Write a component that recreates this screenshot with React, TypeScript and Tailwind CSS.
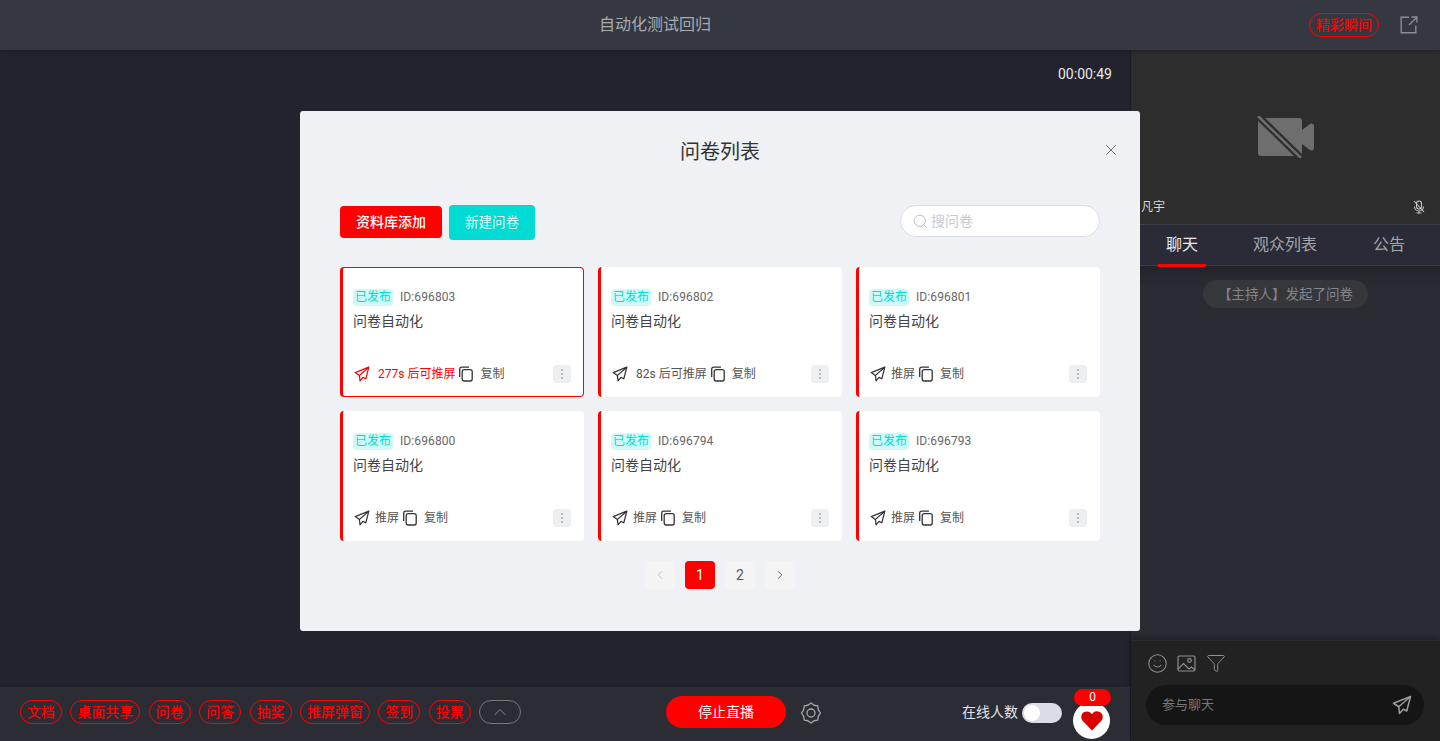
import React from "react";
import { ChevronLeft, ChevronRight, ChevronUp, X, Search, Smile, Filter } from "lucide-react";

const Plane = ({ className = "", size = 16 }: { className?: string; size?: number }) => (
  <svg width={size} height={size} viewBox="0 0 16 16" fill="none" stroke="currentColor" strokeWidth="1.25" strokeLinejoin="round" className={className}>
    <path d="M14.8 1.2 1.2 6.600l4.200 2.800.6 5.400 3-3.400 2.800 1.400z" />
    <path d="M14.8 1.2 5.400 9.400" />
  </svg>
);

const CopyIcon = () => (
  <svg width="16" height="16" viewBox="0 0 16 16" fill="none" stroke="#333" strokeWidth="1.3" className="shrink-0">
    <rect x="4.200" y="3.600" width="10" height="11.400" rx="2" />
    <path d="M1.700 11V3.200C1.700 2 2.600 1.100 3.800 1.100H11" />
  </svg>
);

const gearPath = (() => {
  const pts: string[] = [];
  for (let i = 0; i < 16; i++) {
    const a = (Math.PI * 2 * i) / 16 - Math.PI / 2;
    const r = i % 2 === 0 ? 10 : 8.4;
    pts.push(`${(11 + r * Math.cos(a) * 0.95).toFixed(2)} ${(11 + r * Math.sin(a)).toFixed(2)}`);
  }
  return `M${pts.join("L")}Z`;
})();

const Card = ({ id, push, active, hot, gap = "ml-[5px]" }: { id: string; push: string; active?: boolean; hot?: boolean; gap?: string }) => (
  <div className={`h-[130px] bg-white rounded border-l-[3px] border-l-[#ff0000] flex flex-col pl-[10px] ${active ? "border border-[#ff0000] border-l-[3px] pr-[12px]" : "pr-[13px]"}`}>
    <div className={`flex items-center ${active ? "mt-[20px]" : "mt-[21px]"} h-[18px]`}>
      <span className="h-[17px] w-[40px] rounded-sm bg-[#cff8f7] text-[#00dcd4] text-[12px] leading-[17px] text-center">已发布</span>
      <span className="ml-[7px] text-[12px] text-[#666] tracking-[0.1px]">ID:{id}</span>
    </div>
    <div className="mt-[5px] text-[14px] leading-[20px] text-[#444]">问卷自动化</div>
    <div className={`mt-auto ${active ? "mb-[13px]" : "mb-[14px]"} flex items-center h-[18px]`}>
      <Plane className={`shrink-0 ml-[1px] ${hot ? "text-[#ff0000]" : "text-[#333]"}`} />
      <span className={`${gap} text-[12px] whitespace-nowrap ${hot ? "text-[#ff0000]" : "text-[#555]"}`}>{push}</span>
      <span className="ml-[3px]"><CopyIcon /></span>
      <span className="ml-[6px] text-[12px] text-[#555]">复制</span>
      <span className="ml-auto w-[18px] h-[18px] rounded-sm bg-[#eeeff1] flex flex-col items-center justify-center gap-[2px]">
        <i className="w-[2px] h-[2px] rounded-full bg-[#aaa]" />
        <i className="w-[2px] h-[2px] rounded-full bg-[#aaa]" />
        <i className="w-[2px] h-[2px] rounded-full bg-[#aaa]" />
      </span>
    </div>
  </div>
);

const Pill = ({ children }: { children: React.ReactNode }) => (
  <span className="h-[24px] px-[6px] rounded-full border border-[#ff0000] text-[#ff0000] text-[13.9px] leading-[22px] font-medium whitespace-nowrap">{children}</span>
);

export default function App() {
  return (
    <div className="relative h-[741px] w-[1440px] overflow-hidden flex flex-col bg-[#23232d] font-['Roboto','Noto_Sans_CJK_SC',sans-serif]">
      <header className="h-[50px] shrink-0 relative z-10 flex items-center justify-center pr-[130px] bg-[#353841] shadow-[0_1px_4px_rgba(0,0,0,0.35)]">
        <span className="text-[16px] text-[#a9abb2]">自动化测试回归</span>
        <div className="absolute right-[22px] top-0 h-[50px] flex items-center">
          <span className="h-[24px] w-[70px] text-center rounded-full border border-[#ff0000] text-[#ff0000] text-[14px] leading-[22px] font-medium">精彩瞬间</span>
          <svg width="18" height="18" viewBox="0 0 18 18" fill="none" stroke="#8b8d96" strokeWidth="1.4" className="ml-[21px]">
            <path d="M15.800 9.500v7.300H1.200V1.200H9M9 9 16.800 1.200M11.500 1h5.400v5.400" />
          </svg>
        </div>
      </header>

      <div className="flex flex-1 min-h-0">
        <div className="flex-1 min-w-0 flex flex-col border-r border-[#1c1c24]">
          <main className="flex-1 flex justify-end pt-[15px] pr-[18px]">
            <span className="text-[14px] leading-[18px] text-[#e8e8ea]">00:00:49</span>
          </main>
          <footer className="h-[54px] shrink-0 bg-[#2b2c34] flex items-start pt-[13px] pl-[20px] relative">
            <div className="flex items-center gap-[8.7px]">
              <Pill>文档</Pill><Pill>桌面共享</Pill><Pill>问卷</Pill><Pill>问答</Pill><Pill>抽奖</Pill><Pill>推屏弹窗</Pill><Pill>签到</Pill><Pill>投票</Pill>
              <span className="h-[24px] w-[42px] rounded-full border border-[#77787e] flex items-center justify-center">
                <ChevronUp size={20} strokeWidth={1.2} className="text-[#8b8c92]" />
              </span>
            </div>
            <button className="absolute left-[666px] top-[9px] w-[120px] h-[32px] rounded-full bg-[#ff0000] text-white text-[14px]">停止直播</button>
            <svg width="22" height="22" viewBox="0 0 22 22" fill="none" stroke="#a6a7ad" strokeWidth="1.3" strokeLinejoin="round" className="absolute left-[800px] top-[15px]">
              <path d={gearPath} />
              <circle cx="11" cy="11" r="4" />
            </svg>
            <span className="absolute left-[962px] top-[15px] text-[14px] leading-[20px] text-[#e4e4e6]">在线人数</span>
            <span className="absolute left-[1022px] top-[16px] w-[40px] h-[20px] rounded-full bg-[#dadde6] flex items-center pl-[2px]">
              <i className="w-[16px] h-[16px] rounded-full bg-white" />
            </span>
            <span className="absolute left-[1073px] top-[15px] w-[37px] h-[37px] rounded-full bg-white flex items-center justify-center">
              <svg width="22" height="20" viewBox="0 0 24 22" fill="#d90000"><path d="M12 21.500 2 11C-.8 8-.2 3.500 2.800 1.500 6 -.5 10 .5 12 3.500 14-.5 18-.5 21.200 1.500c3 2 3.600 6.500.8 9.500z" /></svg>
            </span>
            <span className="absolute left-[1074px] top-[2px] w-[37px] h-[17px] rounded-full bg-[#ff0000] text-white text-[12px] leading-[17px] text-center">0</span>
          </footer>
        </div>

        <aside className="w-[309px] shrink-0 flex flex-col bg-[#2a2b33]">
          <div className="h-[174px] shrink-0 bg-[#2d2d2d] relative flex items-center justify-center">
            <svg width="58" height="42" viewBox="0 0 58 42" fill="#6e6e6e">
              <path d="M4 2h38a3 3 0 0 1 3 3v32a3 3 0 0 1-3 3H4a3 3 0 0 1-3-3V5a3 3 0 0 1 3-3z" />
              <path d="M45 14l8-6c2-1 4 0 4 2v22c0 2-2 3-4 2l-8-6z" />
              <path d="M1 0 44 42" stroke="#2d2d2d" strokeWidth="7" />
              <path d="M1 0 44 42" stroke="#6e6e6e" strokeWidth="2.500" />
            </svg>
            <span className="absolute left-[10px] bottom-[8px] text-[12px] leading-[18px] text-[#d8d8d8]">凡宇</span>
            <svg width="12" height="14" viewBox="0 0 12 14" fill="none" stroke="#c8c8c8" strokeWidth="1.100" className="absolute right-[15px] bottom-[10px]">
              <rect x="3.500" y="1" width="5" height="8" rx="2.500" /><path d="M1.500 6.500a4.500 4.500 0 0 0 9 0M6 11v2M3.500 13h5M1 1l10 11" />
            </svg>
          </div>
          <div className="h-[42px] shrink-0 border-t border-b border-[#3c3d47] bg-[#2a2b36] flex text-[16px] text-[#a5a6ad] relative">
            <span className="absolute left-[35px] top-[8px] text-[#e8e8ea]">聊天</span>
            <span className="absolute left-[122px] top-[8px]">观众列表</span>
            <span className="absolute left-[242px] top-[8px]">公告</span>
            <i className="absolute left-[27px] bottom-[-2px] w-[48px] h-[3px] bg-[#ff0000]" />
          </div>
          <div className="flex-1 bg-gradient-to-b from-[#23232b] to-[#2a2b33] to-[6%] flex justify-center items-start pt-[14px]">
            <span className="h-[28px] w-[165px] text-center rounded-full bg-[#36373a] text-[13.5px] leading-[28px] text-[#84858a]">【主持人】发起了问卷</span>
          </div>
          <div className="h-[101px] shrink-0 bg-[#222222] border-t border-[#2a2a2a] shadow-[0_-2px_6px_rgba(0,0,0,0.3)] pl-[15px] pr-[16px]">
            <div className="h-[44px] flex items-center pl-[1px] text-[#8f8f8f]">
              <Smile size={21} strokeWidth={1.2} />
              <svg width="19" height="19" viewBox="0 0 19 19" fill="none" stroke="currentColor" strokeWidth="1.200" className="ml-[9px]"><rect x="1" y="2" width="17" height="15" rx="1.500" /><circle cx="12.500" cy="6.500" r="1.800" /><path d="M1 15 6.500 9.500 12 15l2.500-2 3.500 3" /></svg>
              <Filter size={20} strokeWidth={1.2} className="ml-[10px]" />
            </div>
            <div className="h-[40px] rounded-full bg-[#151515] flex items-center justify-between pl-[16px] pr-[12px]">
              <span className="text-[13px] text-[#77787a]">参与聊天</span>
              <Plane size={20} className="text-[#9a9a9a]" />
            </div>
          </div>
        </aside>
      </div>

      <div className="absolute z-20 left-[300px] top-[111px] w-[840px] h-[520px] bg-[#f0f1f5] rounded-[3px] px-[40px]">
        <div className="text-center text-[20px] leading-[28px] text-[#333] pt-[27px]">问卷列表</div>
        <X size={18} strokeWidth={1.1} className="absolute right-[20px] top-[30px] text-[#555]" />
        <div className="mt-[37px] flex items-center h-[36px]">
          <button className="w-[102px] h-[32px] mt-[2px] rounded bg-[#ff0000] text-white text-[14px] font-medium">资料库添加</button>
          <button className="ml-[7px] mt-[3px] w-[86px] h-[35px] rounded bg-[#00dcd4] text-[#d8f9f7] text-[13.5px]">新建问卷</button>
          <div className="ml-auto w-[200px] h-[32px] rounded-full bg-white border border-[#dcdde6] flex items-center pl-[11px]">
            <Search size={17} strokeWidth={1.2} className="text-[#b0b2bb]" />
            <span className="ml-[2px] text-[14px] text-[#c8c9d0]">搜问卷</span>
          </div>
        </div>
        <div className="mt-[28px] grid grid-cols-3 gap-x-[14px] gap-y-[14px]">
          <Card id="696803" push="277s 后可推屏" active hot gap="ml-[8px]" />
          <Card id="696802" push="82s 后可推屏" gap="ml-[8px]" />
          <Card id="696801" push="推屏" />
          <Card id="696800" push="推屏" />
          <Card id="696794" push="推屏" />
          <Card id="696793" push="推屏" />
        </div>
        <div className="mt-[20px] flex justify-center gap-[10px] text-[14px]">
          <span className="w-[30px] h-[28px] rounded-sm bg-[#f4f4f5] flex items-center justify-center text-[#bbb]"><ChevronLeft size={14} strokeWidth={1.5} /></span>
          <span className="w-[30px] h-[28px] rounded-sm bg-[#ff0000] flex items-center justify-center text-white">1</span>
          <span className="w-[30px] h-[28px] rounded-sm bg-[#f4f4f5] flex items-center justify-center text-[#555]">2</span>
          <span className="w-[30px] h-[28px] rounded-sm bg-[#f4f4f5] flex items-center justify-center text-[#555]"><ChevronRight size={14} strokeWidth={1.5} /></span>
        </div>
      </div>
    </div>
  );
}
